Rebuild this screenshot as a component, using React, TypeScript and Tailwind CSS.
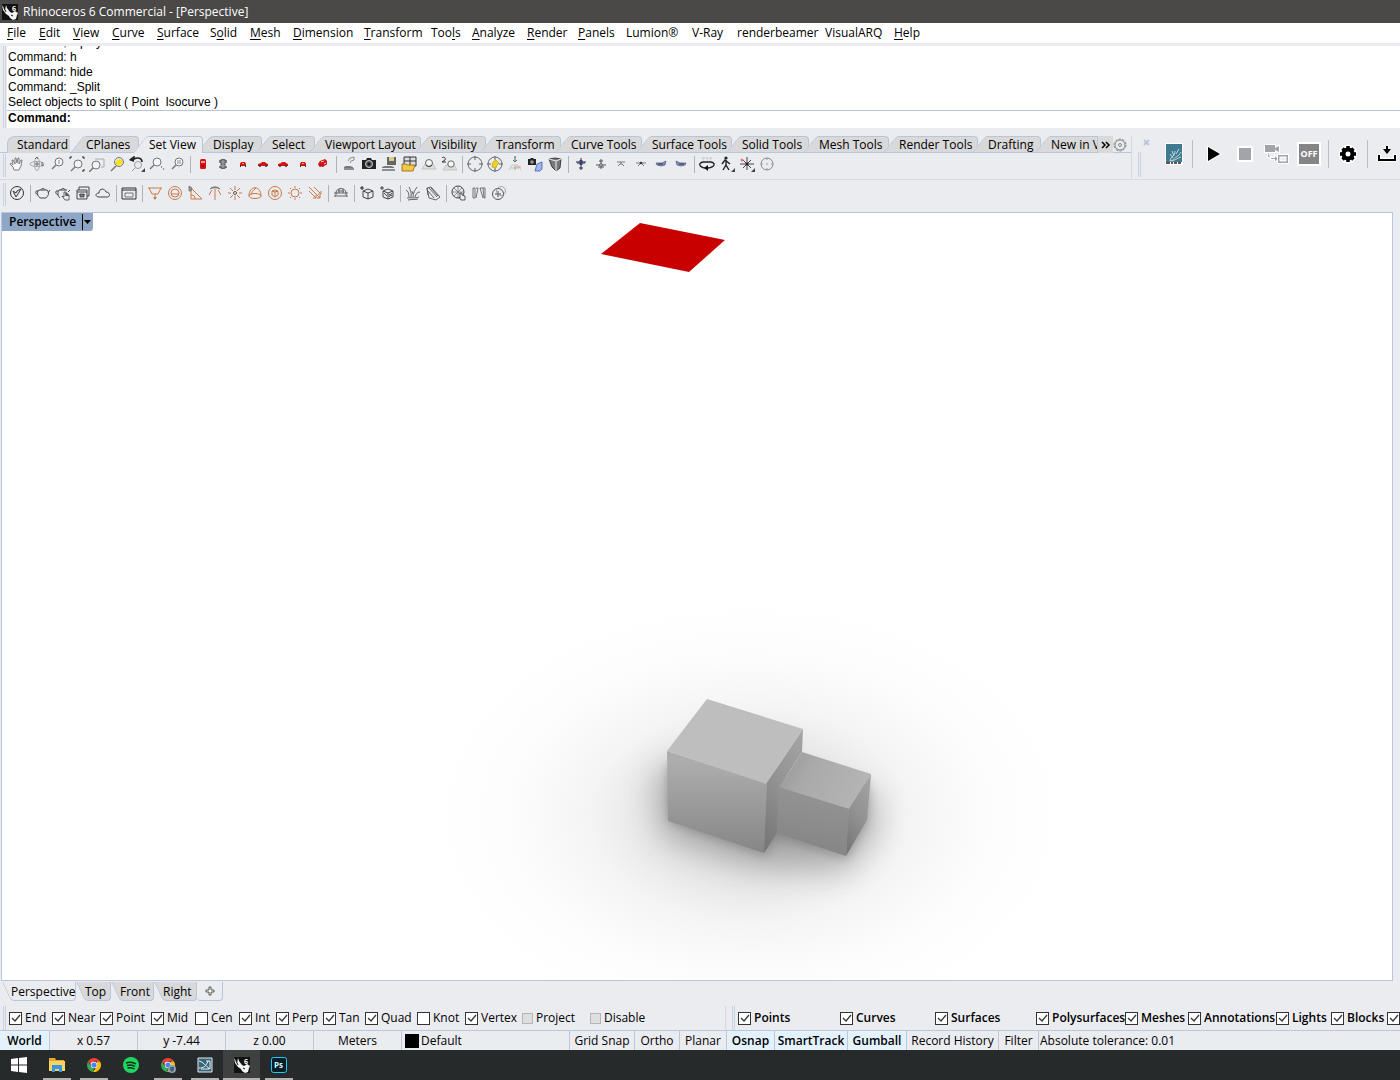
import React from "react";

interface MenuItem {
    label: string;
    // index of the underlined letter, -1 for none
    key: number;
    width: string;
}

interface CheckItem {
    label: string;
    width: string;
    checked?: boolean;
    disabled?: boolean;
}

const menuItems: MenuItem[] = [
    { label: "File", key: 0, width: "w-8" },
    { label: "Edit", key: 0, width: "w-[34px]" },
    { label: "View", key: 0, width: "w-[39px]" },
    { label: "Curve", key: 0, width: "w-[45px]" },
    { label: "Surface", key: 0, width: "w-[53px]" },
    { label: "Solid", key: 1, width: "w-10" },
    { label: "Mesh", key: 0, width: "w-[43px]" },
    { label: "Dimension", key: 0, width: "w-[71px]" },
    { label: "Transform", key: 0, width: "w-[67px]" },
    { label: "Tools", key: 3, width: "w-[41px]" },
    { label: "Analyze", key: 0, width: "w-[55px]" },
    { label: "Render", key: 0, width: "w-[51px]" },
    { label: "Panels", key: 0, width: "w-12" },
    { label: "Lumion®", key: -1, width: "w-[66px]" },
    { label: "V-Ray", key: -1, width: "w-[45px]" },
    { label: "renderbeamer", key: -1, width: "w-[88px]" },
    { label: "VisualARQ", key: -1, width: "w-[69px]" },
    { label: "Help", key: 0, width: "w-10" },
];

const toolTabs = [
    { label: "CPlanes", width: "w-[63px]" },
    { label: "Set View", width: "w-16" },
    { label: "Display", width: "w-[59px]" },
    { label: "Select", width: "w-[53px]" },
    { label: "Viewport Layout", width: "w-[106px]" },
    { label: "Visibility", width: "w-[65px]" },
    { label: "Transform", width: "w-[75px]" },
    { label: "Curve Tools", width: "w-[81px]" },
    { label: "Surface Tools", width: "w-[90px]" },
    { label: "Solid Tools", width: "w-[77px]" },
    { label: "Mesh Tools", width: "w-20" },
    { label: "Render Tools", width: "w-[89px]" },
    { label: "Drafting", width: "w-[63px]" },
];

const osnaps: CheckItem[] = [
    { label: "End", width: "w-[43px]", checked: true },
    { label: "Near", width: "w-12", checked: true },
    { label: "Point", width: "w-[51px]", checked: true },
    { label: "Mid", width: "w-11", checked: true },
    { label: "Cen", width: "w-11" },
    { label: "Int", width: "w-[37px]", checked: true },
    { label: "Perp", width: "w-[47px]", checked: true },
    { label: "Tan", width: "w-[42px]", checked: true },
    { label: "Quad", width: "w-[52px]", checked: true },
    { label: "Knot", width: "w-12" },
    { label: "Vertex", width: "w-[57px]", checked: true },
    { label: "Project", width: "w-[68px]", disabled: true },
    { label: "Disable", width: "w-[135px]", disabled: true },
];

const filters: CheckItem[] = [
    { label: "Points", width: "w-[102px]", checked: true },
    { label: "Curves", width: "w-[95px]", checked: true },
    { label: "Surfaces", width: "w-[101px]", checked: true },
    { label: "Polysurfaces", width: "w-[89px]", checked: true },
    { label: "Meshes", width: "w-[63px]", checked: true },
    { label: "Annotations", width: "w-[88px]", checked: true },
    { label: "Lights", width: "w-[55px]", checked: true },
    { label: "Blocks", width: "w-14", checked: true },
    { label: "", width: "w-5", checked: true },
];

const lens = (cx: number, cy: number) => (
    <>
        <circle cx={cx} cy={cy} r="4" stroke="#777" fill="#f3f4f6" />
        <path d={`M${cx - 3} ${cy + 3}L${cx - 7} ${cy + 7}`} stroke="#777" strokeWidth="1.5" />
    </>
);

const cube = <path d="M4 6l5-2 5 2v6l-5 2-5-2zM4 6l5 2 5-2M9 8v6" stroke="#444" />;

// 16x16 glyphs of the two toolbars
const glyphs: Record<string, React.ReactNode> = {
    pan: <path d="M5 14l-1-3-3-3c0-1 1-1 3 1L3 4h1l2 4V2h1l1 5 1-5h1v6l2-4h1l-1 6-2 4z" stroke="#666" fill="#f8f8f8" strokeWidth=".8" />,
    rotate: (
        <>
            <ellipse cx="8" cy="8" rx="7" ry="2.5" stroke="#999" strokeWidth=".8" />
            <ellipse cx="8" cy="8" rx="2.5" ry="6.5" stroke="#999" strokeWidth=".8" />
            <path d="M8 6v4M6 8h4M13 6v4l2-1M6 3l2-2 1 2" stroke="#666" />
        </>
    ),
    zoom: <>{lens(10, 6)}<path d="M10 4v4M9 5h2M9 7h2" stroke="#999" strokeWidth=".7" /></>,
    zoomExt: <>{lens(9, 8)}<path d="M1 1h2M1 1v2M15 1h-2M15 1v2M15 15h-2M15 15v-2" stroke="#222" /></>,
    zoomWin: <><path d="M6 3h9v8h-3" stroke="#aaa" />{lens(7, 9)}</>,
    zoomSel: <><path d="M7 5l3-2 4 1-1 4-4 2-3-2z" fill="#f4df20" /><circle cx="10" cy="6" r="4.5" stroke="#777" /><path d="M7 10l-5 5" stroke="#777" strokeWidth="1.5" /></>,
    undo: <><path d="M1 4l4-3v2c4-2 8-1 8 3" stroke="#222" strokeWidth="1.600" /><path d="M0 4l5-3v5z" fill="#222" /><circle cx="9" cy="9" r="3.500" stroke="#999" /><path d="M6 12l-3 3" stroke="#999" /><path d="M16 12v4h-4z" fill="#444" /></>,
    zoomDyn: <>{lens(8, 6)}<path d="M12 11h1M14 13h1" stroke="#333" /></>,
    zoom11: <>{lens(10, 6)}<path d="M9 4v4M11 4v4" stroke="#777" strokeWidth=".8" /></>,
    carTop: <><rect x="5" y="3" width="6" height="10" rx="1.500" fill="#d81212" /><rect x="6" y="5" width="4" height="2" fill="#ff9a9a" /><path d="M6.500 10h3" stroke="#6b0000" /></>,
    carBottom: <><rect x="5.500" y="3" width="5" height="10" rx="1" fill="#666" /><path d="M8 4v8M6 6h4M6 10h4" stroke="#aaa" /><path d="M5 4v3M11 4v3M5 10v2M11 10v2" stroke="#222" /></>,
    carFront: <><path d="M5 8l1-2h4l1 2v2H5z" fill="#d81212" /><path d="M5.500 9v2M10.500 9v2" stroke="#333" /><path d="M7 7.500h2" stroke="#f8b050" /></>,
    carSide: <><path d="M3 8l3-1 1-1h3l1 1 2 1v2H3z" fill="#d81212" /><circle cx="5" cy="10" r="1" fill="#333" /><circle cx="11" cy="10" r="1" fill="#333" /></>,
    carPersp: <><path d="M3 8l2-3 5-2 2 2v3l-4 3-4-1z" fill="#d81212" /><path d="M6 6l3-1M9 8l2-1" stroke="#fff" strokeWidth=".8" /><path d="M5 9v2M11 8v1" stroke="#333" /></>,
    camCar: <><path d="M3 11l2-1h4l3 1v1H3z" fill="#777" /><path d="M7 5l2-3 4-1v3l-3 1M10 5l-1 2" stroke="#777" strokeWidth=".8" /><path d="M3 13h10" stroke="#333" /></>,
    camera: <><path d="M1 4h4l1-2h4l1 2h4v9H1z" fill="#222" /><circle cx="8" cy="8" r="3.500" fill="#555" stroke="#ccc" /><circle cx="8" cy="8" r="1.500" fill="#111" /></>,
    saveView: <><path d="M6 1h9v8H6z" fill="#666" /><path d="M8 1h5v4H8z" fill="#d9cf80" /><path d="M1 11l3-1h6l3 1v1H1z" fill="#777" /><path d="M1 14h13" stroke="#333" /></>,
    openView: <><path d="M3 1h12v9H3z" fill="#ddd" stroke="#333" /><path d="M9 1v9M3 5h12" stroke="#333" /><path d="M1 8h4l1 1h8l-2 6H1z" fill="#f5c842" stroke="#8a6510" strokeWidth=".8" /></>,
    persp: <><path d="M1 13l3-5h8l3 5z" stroke="#bbb" fill="#ddd" strokeWidth=".8" /><circle cx="8" cy="7" r="3.500" fill="#f6f6f6" stroke="#666" /><path d="M5 9c2 2 4 2 6 0" stroke="#333" /></>,
    persp2: <><path d="M2 14l3-5h8l3 5z" stroke="#bbb" fill="#ddd" strokeWidth=".8" /><circle cx="10" cy="8" r="3.200" fill="#f6f6f6" stroke="#666" /><path d="M1 2c2-2 4 0 3 2L1 6h4" stroke="#333" /></>,
    target: <><circle cx="8" cy="8" r="7" stroke="#666" /><path d="M8 0v4M8 12v4M0 8h4M12 8h4" stroke="#666" /></>,
    targetY: <><circle cx="8" cy="8" r="7" stroke="#666" /><path d="M6 6l3-2 3 3-2 2-1 3-4-1z" fill="#f2d21c" stroke="#a98e00" strokeWidth=".6" /><path d="M8 0v4M8 12v4M0 8h4M12 8h4" stroke="#666" /></>,
    cplane: <><path d="M2 14l3-5h6l3 5M8 9v5M4 12h8" stroke="#bbb" strokeWidth=".8" /><path d="M8 1v4M6 4l2 2 2-2M7 1h2" stroke="#666" /><path d="M8 11h6" stroke="#e29a9a" /><path d="M8 11v3" stroke="#8bc38b" /></>,
    camObj: <><path d="M1 3h2l1-1h2l1 1h2v6H1z" fill="#222" /><circle cx="5" cy="6" r="1.800" fill="#999" /><path d="M10 8l5-2v7l-2 2H8z" fill="#9fb8ee" stroke="#3d5eb0" strokeWidth=".8" /></>,
    viewCube: <><path d="M2 3l6-1 6 1-1 9-4 3-4-4z" fill="#777" stroke="#222" strokeWidth=".8" /><path d="M2 3l7 2 5-2M9 5v10" stroke="#eee" /></>,
    planeTop: <><path d="M8 2v12M3 6h10M4 7h8M6 12h4" stroke="#222a44" /><path d="M6.500 4h3v5h-3z" fill="#39456e" /></>,
    planeBottom: <><path d="M8 3v10M6 5h4M3 9h10M5 11h6" stroke="#555" /><circle cx="8" cy="9" r="1.500" fill="#bbb" stroke="#555" strokeWidth=".8" /></>,
    planeFront: <path d="M4 6h8M8 6v2M5 10l2-2h2l2 2" stroke="#777" />,
    planeBack: <><path d="M3 7h10M5 10l2-2M11 10L9 8" stroke="#556" strokeWidth=".8" /><circle cx="8" cy="7" r="1.300" fill="#334" /></>,
    planeL: <><path d="M3 7h6l4-2-1 4-4 1-4-1z" fill="#8d93b8" stroke="#4d5578" strokeWidth=".7" /><path d="M5 8h5" stroke="#336" /></>,
    planeR: <><path d="M13 7H7L3 5l1 4 4 1 4-1z" fill="#8d93b8" stroke="#4d5578" strokeWidth=".7" /><path d="M6 8h5" stroke="#336" /></>,
    turn: <><path d="M3 2h3M7 2h2M10 2h3M4 4h1M8 4h1M11 4h1" stroke="#bbb" /><path d="M4 6c-5 1-4 5 2 6M12 6c5 1 4 5-3 6M4 6h8" stroke="#222" strokeWidth="1.300" /><path d="M9 9v6l-4-3z" fill="#111" /></>,
    walk: <><circle cx="7" cy="2" r="1.600" fill="#222" /><path d="M7 4v5l3 5M7 9l-3 5M3 8l3-4 5 4" stroke="#222" strokeWidth="1.400" /><path d="M16 12v4h-4z" fill="#444" /></>,
    star: <><path d="M8 1v13M1 8h14M4 4l8 8M12 4l-8 8" stroke="#333" strokeWidth=".9" /><circle cx="8" cy="8" r="1.500" fill="#222" /><circle cx="3" cy="4" r="1.500" fill="#e77" /><path d="M16 12v4h-4z" fill="#444" /></>,
    targetSm: <><circle cx="8" cy="8" r="6" stroke="#888" /><path d="M8 2v2M8 12v2M2 8h2M12 8h2M7 8h2" stroke="#999" /></>,
    vray: <><circle cx="8" cy="8" r="6.500" stroke="#333" /><path d="M4 6l3 6 5-8-4 2-1 2z" stroke="#333" /></>,
    teapot: <path d="M4 5h8c3 3 1 6-1 8H5C3 11 1 8 4 5zM6 5c0-2 4-2 4 0M13 8l2-3M3 6C0 5 0 9 3 10" stroke="#444" />,
    teapotHand: <><path d="M4 5h8M6 5c0-2 4-2 4 0M3 6C0 5 0 9 3 10M4 5c-2 3-1 6 1 8M13 7l2-2" stroke="#444" /><path d="M9 7v5l-2-1 3 4h4v-5h-1v1-2h-1v2-3h-1v3V7z" stroke="#444" fill="#eee" strokeWidth=".8" /></>,
    teapotFrame: <><path d="M2 5h10v9H2zM4 5V2h10v9h-2M2 7h10" stroke="#444" /><path d="M5 9h4v3H5zM4 9l1 1M10 9l-1 1" stroke="#444" fill="#777" strokeWidth=".8" /></>,
    cloud: <path d="M4 12c-4 0-4-4 0-4 0-5 6-5 7-1 4 0 5 5 1 5z" stroke="#444" />,
    frame: <><path d="M1 3h14v11H1zM1 5h14" stroke="#333" /><path d="M4 8h8v4H4z" stroke="#777" /></>,
    rect: <><path d="M1 3h14M2 3l3 6h6l3-6M8 9v5" stroke="#c77b48" /><path d="M6 12h4l-2 3z" fill="#c77b48" /></>,
    ring: <><circle cx="8" cy="8" r="6.500" stroke="#c77b48" /><circle cx="8" cy="8" r="4" stroke="#c77b48" /><path d="M4 9h8" stroke="#c77b48" /></>,
    spot: <><path d="M4 3v11h11zM4 10c3 0 4 1 4 4" stroke="#c77b48" /><path d="M2 1l3 2-1 3-2 0z" fill="#999" stroke="#666" strokeWidth=".7" /></>,
    ies: <><path d="M8 4v11M5 5L2 10M11 5l3 5" stroke="#c77b48" /><path d="M3 4c2-3 8-3 10 0l-3-1H6z" fill="#888" stroke="#777" strokeWidth=".7" /></>,
    omni: <><path d="M8 1v4M8 11v4M1 8h3M12 8h3M3 3l3 3M13 3l-3 3M3 13l3-3M13 13l-3-3" stroke="#c77b48" /><circle cx="8" cy="8" r="1.500" stroke="#555" /></>,
    dome: <><path d="M2 11c0-11 12-11 12 0M9 3c-3 2-5 5-5 7" stroke="#c77b48" /><ellipse cx="8" cy="11" rx="6" ry="2.500" stroke="#c77b48" /></>,
    meshLight: <><circle cx="8" cy="8" r="6.500" stroke="#c77b48" /><path d="M5 6l3-1 3 1v4l-3 2-3-2zM5 6l3 1 3-1M8 7v5" stroke="#c77b48" /></>,
    sun: <><circle cx="8" cy="8" r="4" stroke="#c77b48" /><path d="M8 1v2M8 13v2M1 8h2M13 8h2M3 3l1 1M12 12l1 1M13 3l-1 1M4 12l-1 1" stroke="#c77b48" /></>,
    rays: <><path d="M2 6l7 7M2 2l11 11M7 2l7 7" stroke="#c77b48" /><path d="M9 10v3H6M13 10v3h-3M14 6v3h-3" stroke="#c77b48" /></>,
    domeTool: <path d="M1 8h14M3 8c0-6 10-6 10 0M4 11h8M3 8v4M13 8v4M5 6h6M6 4v4M10 4v4M1 11h2M13 11h2" stroke="#555" strokeWidth=".9" />,
    cubeT: <>{cube}<path d="M3 1v4M1 3h4" stroke="#222" /></>,
    cubeX: <>{cube}<path d="M3 1v4M1 3h4M5 8l3 3M10 9l3 2M10 12l3-4" stroke="#333" strokeWidth=".9" /></>,
    fur: <path d="M2 13c4-1 8 1 12-1M3 15c4-1 7 0 10-1M4 12C4 8 3 6 1 5M6 12C7 8 5 4 4 2M8 12c0-4 2-7 4-10M10 12c1-3 2-5 5-5M8 9l-1-3" stroke="#555" strokeWidth=".9" />,
    clip: <path d="M2 3l4-1 9 10-4 3-7-2zM4 3l8 9M6 3l7 8M3 6l6 7M2 3l1 7" stroke="#555" strokeWidth=".9" />,
    ball: <><circle cx="7" cy="7" r="6" stroke="#444" /><path d="M3 3l8 8M11 3l-8 8M7 1v12M1 7h12" stroke="#777" strokeWidth=".8" /><path d="M9 8v5l-1-1 2 3h4v-4l-3-1V8z" fill="#eee" stroke="#333" strokeWidth=".8" /></>,
    mirror: <path d="M2 3h2v10H2zM5 3l2 0-2 10M14 3h-2l-3 0 3 10M12 3l1 10h1V3" stroke="#666" strokeWidth=".9" />,
    sphere: <><circle cx="7" cy="9" r="5.500" stroke="#555" /><path d="M7 6v6M4 9h6" stroke="#555" /><circle cx="10" cy="6" r="4.500" stroke="#888" strokeWidth=".7" /></>,
};

const viewTools = [
    "pan", "rotate", "zoom", "zoomExt", "zoomWin", "zoomSel", "undo", "zoomDyn", "zoom11", "|",
    "carTop", "carBottom", "carFront", "carSide", "carSide", "carFront", "carPersp", "|",
    "camCar", "camera", "saveView", "openView", "persp", "persp2", "|",
    "target", "targetY", "cplane", "camObj", "viewCube", "|",
    "planeTop", "planeBottom", "planeFront", "planeBack", "planeL", "planeR", "|",
    "turn", "walk", "star", "targetSm",
];

const vrayTools = [
    "vray", "|", "teapot", "teapotHand", "teapotFrame", "cloud", "|", "frame", "|",
    "rect", "ring", "spot", "ies", "omni", "dome", "meshLight", "sun", "rays", "|",
    "domeTool", "|", "cubeT", "cubeX", "|", "fur", "clip", "|", "ball", "mirror", "sphere",
];

function Grip() {
    return <div className="w-[3px] shrink-0 self-stretch border-x border-[#c9d1e3]" />;
}

function Toolbar({ tools, label }: { tools: string[]; label: string }) {
    return (
        <div role="toolbar" aria-label={label} className="flex h-[23px] items-start">
            {tools.map((tool, idx) =>
                tool === "|" ? (
                    <span key={idx} className="flex w-[6px] justify-center pt-[2px]">
                        <span className="h-[17px] w-px bg-[#b0b2b8]" />
                    </span>
                ) : (
                    <button key={idx} type="button" aria-label={tool} className="flex h-5 w-5 items-center justify-center">
                        <svg viewBox="0 0 16 16" fill="none" className="size-4">{glyphs[tool]}</svg>
                    </button>
                )
            )}
        </div>
    );
}

function RhinoLogo() {
    return (
        <svg viewBox="0 0 16 16" className="size-4">
            <rect width="16" height="16" fill="#111" />
            <path d="M0 1l1 5 3 4 3 2 1 2 3 2 3-1 1-4 1-2-3-2-3 2-2-1-3-4-1-3-1 5-3-5z" fill="#f4f4f4" />
            <path d="M2 4l2 4M9 11l2 1" stroke="#111" fill="none" />
            <text x="10" y="7" fontSize="7" fontWeight="700" fill="#fff" fontFamily="Open Sans, sans-serif">6</text>
        </svg>
    );
}

function ToolTab({ label, width, active }: { label: string; width: string; active?: boolean }) {
    const fill = active
        ? "z-10 before:bg-[#ebecf0] after:bg-[#ebecf0]"
        : "before:bg-[#d9d9d9] after:bg-[#d9d9d9] before:border-b after:border-b";
    return (
        <button
            type="button"
            role="tab"
            aria-selected={!!active}
            className={`relative isolate h-[17px] shrink-0 pl-4 text-left whitespace-nowrap before:absolute before:inset-y-0 before:left-0 before:-z-10 before:w-5 before:origin-bottom-left before:-skew-x-[38deg] before:rounded-tl-[3px] before:border-t before:border-l before:border-[#b9c4de] after:absolute after:inset-y-0 after:-right-[6px] after:left-[18px] after:-z-20 after:rounded-tr-[4px] after:border-t after:border-r after:border-[#b9c4de] ${fill} ${width}`}
        >
            {label}
        </button>
    );
}

function ViewTab({ label, width, active }: { label: string; width: string; active?: boolean }) {
    const fill = active ? "z-10 before:bg-[#ebecf0] after:bg-[#ebecf0]" : "before:bg-[#d9d9d9] after:bg-[#d9d9d9]";
    return (
        <button
            type="button"
            role="tab"
            aria-selected={!!active}
            className={`relative isolate h-[19px] pl-[9px] text-left before:absolute before:inset-y-0 before:left-0 before:-z-10 before:w-4 before:origin-top-left before:skew-x-[25deg] before:rounded-bl-[4px] before:border-b before:border-l before:border-[#b9c4de] after:absolute after:inset-y-0 after:right-0 after:left-3 after:-z-20 after:rounded-br-[4px] after:border-r after:border-b after:border-[#b9c4de] ${fill} ${width}`}
        >
            {label}
        </button>
    );
}

function Check({ item, bold }: { item: CheckItem; bold?: boolean }) {
    return (
        <label className={`flex shrink-0 items-center gap-[3px] whitespace-nowrap ${item.width} ${bold ? "font-semibold" : ""}`}>
            <span className="grid shrink-0 place-items-center *:col-start-1 *:row-start-1">
                <input
                    type="checkbox"
                    aria-label={item.label || "Control points"}
                    defaultChecked={item.checked}
                    disabled={item.disabled}
                    className="peer size-[13px] appearance-none border border-[#333] bg-white disabled:size-[11px] disabled:border-[#b5b5b5] disabled:bg-[#dedede]"
                />
                <svg viewBox="0 0 13 13" className="pointer-events-none hidden size-[13px] peer-checked:block">
                    <path d="M3 6l3 3 5-6" fill="none" stroke="#333" strokeWidth="1.3" />
                </svg>
            </span>
            {item.label}
        </label>
    );
}

function LumionBar() {
    return (
        <div className="flex min-w-[260px] flex-1 border-l border-[#d3d9e7] pl-[6px]">
            <div className="flex flex-col items-start pt-[2px] pb-[2px]">
                <button type="button" aria-label="Close toolbar" className="mb-[5px] ml-1 size-[9px]">
                    <svg viewBox="0 0 9 9"><path d="M2 2l5 5M7 2L2 7" stroke="#b9c4de" strokeWidth="2" /></svg>
                </button>
                <div className="flex flex-1"><Grip /></div>
            </div>
            <div className="ml-[10px] flex h-9 items-center">
                <button type="button" aria-label="Lumion" className="ml-1">
                    <svg viewBox="0 0 18 22" className="h-[22px] w-[18px]">
                        <rect width="18" height="22" rx="1" fill="#fff" />
                        <rect x="1" y="1" width="16" height="18" fill="#3f7a91" />
                        <path d="M5 18c1-6 5-4 5-10M7 18c3-5 7-4 9-9M5 18c5 0 7-3 11-4M9 13L7 8M11 11l3-5M8 15l-3-4" stroke="#cfe2e8" fill="none" strokeWidth=".9" />
                        <path d="M1 20h4M6 20h2M9 20h3M13 20h3" stroke="#222" strokeWidth="1.500" />
                    </svg>
                </button>
                <span className="mx-[9px] h-7 w-px bg-[#bbbdc2]" />
                <button type="button" aria-label="Play" className="ml-[3px]">
                    <svg viewBox="0 0 18 18" className="size-[18px]"><path d="M3 2l12 7-12 7z" fill="#000" stroke="#fff" strokeWidth="2" paintOrder="stroke" /></svg>
                </button>
                <button type="button" aria-label="Stop" className="ml-[14px] size-4 border-2 border-white bg-[#a2a4a9]" />
                <button type="button" aria-label="Camera sync" className="ml-[10px]">
                    <svg viewBox="0 0 26 22" className="h-[22px] w-[26px]">
                        <g stroke="#fff" strokeWidth="2" paintOrder="stroke" fill="#a2a4a9">
                            <path d="M2 2h10v3l4-2v6l-4-2v2H2z" />
                            <path d="M5 9v5h2v2M8 15h4v-2l3 3-3 2v-2H8z" />
                            <path d="M15 12h10v8H15zm1.500 1.500v5h7v-5z" fillRule="evenodd" />
                        </g>
                    </svg>
                </button>
                <button type="button" className="ml-2 h-6 w-6 border-2 border-white bg-[#858585] text-[9px] leading-5 font-bold text-white">
                    OFF
                </button>
                <span className="mx-[7px] h-7 w-px bg-[#bbbdc2]" />
                <button type="button" aria-label="Settings" className="ml-[2px]">
                    <svg viewBox="0 0 20 20" className="size-5">
                        <circle cx="10" cy="10" r="9.500" fill="#fff" />
                        <circle cx="10" cy="10" r="4.500" fill="none" stroke="#000" strokeWidth="4" />
                        <path d="M10 2v3M10 15v3M2 10h3M15 10h3M4.500 4.500l2 2M13.500 13.500l2 2M15.500 4.500l-2 2M6.500 13.500l-2 2" stroke="#000" strokeWidth="3.500" />
                    </svg>
                </button>
                <span className="mx-[9px] h-7 w-px bg-[#bbbdc2]" />
                <button type="button" aria-label="Export">
                    <svg viewBox="0 0 20 20" className="size-5" fill="none">
                        <path d="M2 10v6h16v-6M10 2v6" stroke="#fff" strokeWidth="4" />
                        <path d="M2 11v5h16v-5" stroke="#000" strokeWidth="2" />
                        <path d="M10 2v5" stroke="#000" strokeWidth="2" />
                        <path d="M6 5h8l-4 5z" fill="#000" />
                    </svg>
                </button>
            </div>
        </div>
    );
}

// rendered view: area light, two boxes and their soft shadow
function Scene() {
    return (
        <svg viewBox="2 213 1390 767" preserveAspectRatio="xMidYMid slice" className="block size-full">
            <defs>
                <radialGradient id="halo">
                    <stop offset="0" stopColor="#777" stopOpacity=".4" />
                    <stop offset=".3" stopColor="#888" stopOpacity=".22" />
                    <stop offset=".5" stopColor="#888" stopOpacity=".09" />
                    <stop offset=".75" stopColor="#999" stopOpacity=".025" />
                    <stop offset="1" stopColor="#aaa" stopOpacity="0" />
                </radialGradient>
                <linearGradient id="front" x1="0" y1="0" x2="0" y2="1">
                    <stop offset=".1" stopColor="#adadad" />
                    <stop offset="1" stopColor="#868686" />
                </linearGradient>
                <linearGradient id="side" x1=".7" y1="0" x2=".3" y2="1">
                    <stop offset="0" stopColor="#a2a2a2" />
                    <stop offset=".5" stopColor="#929292" />
                    <stop offset="1" stopColor="#787878" />
                </linearGradient>
                <linearGradient id="smallTop" x1="0" y1="0" x2="1" y2=".3">
                    <stop offset="0" stopColor="#969696" />
                    <stop offset=".4" stopColor="#aaa" />
                    <stop offset="1" stopColor="#b4b4b4" />
                </linearGradient>
                <linearGradient id="smallFront" x1=".3" y1="0" x2=".1" y2="1">
                    <stop offset="0" stopColor="#949494" />
                    <stop offset="1" stopColor="#838383" />
                </linearGradient>
                <filter id="soft" x="-50%" y="-50%" width="200%" height="200%">
                    <feGaussianBlur stdDeviation="16" />
                </filter>
                <filter id="contact" x="-50%" y="-50%" width="200%" height="200%">
                    <feGaussianBlur stdDeviation="5" />
                </filter>
            </defs>
            <rect x="2" y="213" width="1390" height="767" fill="#fff" />
            <ellipse cx="750" cy="815" rx="320" ry="215" fill="url(#halo)" />
            <path d="M655 775l20-10 180 30 20 0 0 35-30 40-85-4-98-30z" fill="#666" opacity=".45" filter="url(#soft)" />
            <path d="M667 765l200 15 4 15-4 28-20 36-70-20-12 17-97-34z" fill="#555" opacity=".3" filter="url(#contact)" />
            <polygon points="640,223 725,240 689,272 601,254" fill="#c80000" />
            <polygon points="802,752 871,774 849,809 779,788" fill="url(#smallTop)" />
            <polygon points="779,787 849,809 846,856 776,833" fill="url(#smallFront)" />
            <polygon points="849,809 871,774 867,820 846,856" fill="url(#side)" />
            <polygon points="766,784 803,729 802,752 779,787 777,833 764,853" fill="url(#side)" />
            <polygon points="667,751 767,784 764,853 668,821" fill="url(#front)" />
            <polygon points="707,699 803,729 766,784 667,751" fill="#bebebe" />
        </svg>
    );
}

function Chrome() {
    return (
        <>
            <path d="M8 1a7 7 0 0 1 6 3.500H8L5 8 2 4.500A7 7 0 0 1 8 1z" fill="#ea4335" />
            <path d="M2 4.500L5.200 10 8 11.500 7 15A7 7 0 0 1 2 4.500z" fill="#34a853" />
            <path d="M14 4.500A7 7 0 0 1 7 15l4-6V4.500z" fill="#fbbc05" />
            <circle cx="8" cy="8" r="3.300" fill="#fff" />
            <circle cx="8" cy="8" r="2.600" fill="#4285f4" />
        </>
    );
}

const taskApps: { name: string; running?: boolean; active?: boolean; icon: React.ReactNode }[] = [
    {
        name: "File Explorer",
        running: true,
        icon: (
            <>
                <path d="M0 1h6l1 2h8v4H0z" fill="#e8a92c" />
                <path d="M0 4h16v10H0z" fill="#fbd264" />
                <path d="M3 8h10v7h-3v-3H6v3H3z" fill="#3a97dd" />
            </>
        ),
    },
    { name: "Chrome", running: true, icon: <Chrome /> },
    {
        name: "Spotify",
        icon: (
            <>
                <circle cx="8" cy="8" r="8" fill="#1ed760" />
                <path d="M3 6c3-1 7-1 10 1M4 8.500c3-1 6-.5 8 1M4.500 11c2-.5 5-.5 7 1" stroke="#16261c" strokeWidth="1.500" fill="none" />
            </>
        ),
    },
    {
        name: "Chrome profile",
        running: true,
        icon: (
            <>
                <Chrome />
                <circle cx="12" cy="12" r="4" fill="#8aa0ae" />
                <path d="M10 10h4v3l-2 2-2-2z" fill="#476078" />
            </>
        ),
    },
    {
        name: "Lumion LiveSync",
        running: true,
        icon: (
            <>
                <path d="M1 1h14v14H1z" fill="#37667b" stroke="#e5edf0" />
                <path d="M2 4c5 1 6 5 11 8M2 11c4 0 7-1 9-7M9 4h4v8M4 12h8" stroke="#fff" strokeWidth=".9" fill="none" />
            </>
        ),
    },
    { name: "Rhinoceros 6", running: true, active: true, icon: null },
    {
        name: "Photoshop",
        running: true,
        icon: (
            <>
                <rect x=".5" y=".5" width="15" height="15" rx="2" fill="#061e26" stroke="#26c9ff" />
                <text x="3" y="11" fontSize="8" fontWeight="700" fill="#d8f5ff" fontFamily="Open Sans, sans-serif">Ps</text>
            </>
        ),
    },
];

const cell = "flex h-[19px] shrink-0 items-center justify-center border-r border-[#bcc6dc] whitespace-nowrap";
const activeCell = `${cell} bg-[#e3f2fc] font-semibold`;

function App() {
    return (
        <div className="flex min-h-screen flex-col overflow-hidden bg-[#ebecf0] font-['Open_Sans',sans-serif] text-[12px] leading-4 text-black">
            <header className="flex h-[23px] items-center gap-[5px] bg-[#4a4948] pl-[2px] text-white">
                <RhinoLogo />
                <h1>Rhinoceros 6 Commercial - [Perspective]</h1>
            </header>

            <nav className="flex h-5 items-center bg-white pl-[7px]">
                {menuItems.map((item) => (
                    <button key={item.label} type="button" className={`shrink-0 text-left whitespace-nowrap ${item.width}`}>
                        {item.key < 0 ? item.label : (
                            <>
                                {item.label.slice(0, item.key)}
                                <span className="underline underline-offset-2">{item.label[item.key]}</span>
                                {item.label.slice(item.key + 1)}
                            </>
                        )}
                    </button>
                ))}
            </nav>

            <section className="flex gap-px py-[3px] pl-[3px] font-['Liberation_Sans',Arial,sans-serif] leading-[15px]">
                <Grip />
                <div className="flex-1 bg-white">
                    <div className="flex h-16 flex-col justify-end overflow-hidden pl-px whitespace-pre">
                        <p>3 surfaces, 1 polysurface added to selection.</p>
                        <p>Command: h</p>
                        <p>Command: hide</p>
                        <p>Command: _Split</p>
                        <p>Select objects to split ( Point  Isocurve )</p>
                    </div>
                    <label className="flex h-[18px] items-start border-t border-[#b8c4da] pl-px font-bold">
                        Command:
                        <input type="text" className="ml-1 flex-1 font-normal outline-none" />
                    </label>
                </div>
            </section>

            <div className="flex border-b border-[#d3d9e7] pt-[5px]">
                <div className="w-[1131px] shrink-0">
                    <div role="tablist" className="flex border-b border-[#b9c4de] pl-[7px]">
                        <div className="-mb-px flex">
                            <button type="button" role="tab" aria-selected={false} className="relative h-[17px] w-[63px] rounded-tl-[8px] border-t border-l border-[#b9c4de] bg-[#d9d9d9] pl-[9px] text-left">
                                Standard
                            </button>
                            {toolTabs.map((tab) => (
                                <ToolTab key={tab.label} label={tab.label} width={tab.width} active={tab.label === "Set View"} />
                            ))}
                            <div className="w-[62px] overflow-hidden">
                                <ToolTab label="New in V6" width="w-20" />
                            </div>
                            <button type="button" aria-label="More tabs" className="w-4 border-l border-[#b9c4de] bg-[#d9d9d9] text-center">
                                <svg viewBox="0 0 10 8" className="mx-auto h-2 w-[10px]"><path d="M1 1l3 3-3 3M5 1l3 3-3 3" fill="none" stroke="#000" strokeWidth="1.500" /></svg>
                            </button>
                            <button type="button" aria-label="Toolbar options">
                                <svg viewBox="0 0 14 14" className="size-[14px]" fill="none" stroke="#888">
                                    <circle cx="7" cy="7" r="6" strokeDasharray="2.500 1.200" />
                                    <circle cx="7" cy="7" r="5" />
                                    <circle cx="7" cy="7" r="1.500" />
                                </svg>
                            </button>
                        </div>
                    </div>
                    <div className="flex gap-px pt-px pb-[2px] pl-[3px]">
                        <Grip />
                        <Toolbar tools={viewTools} label="Set View" />
                    </div>
                </div>
                <LumionBar />
            </div>

            <div className="mb-[6px] flex gap-px pt-[3px] pl-[3px]">
                <Grip />
                <Toolbar tools={vrayTools} label="V-Ray" />
            </div>

            <main className="relative mr-[7px] ml-px min-h-0 flex-1 border border-[#b9c4de] bg-white">
                <Scene />
                <button type="button" className="absolute top-0 left-0 flex h-[18px] w-[91px] items-center rounded-br-[3px] bg-[#8ea7c6] pl-[7px] font-semibold">
                    <span className="w-[73px] text-left">Perspective</span>
                    <span className="flex h-4 items-center border-l border-black pl-[1px]">
                        <svg viewBox="0 0 7 4" className="h-1 w-[7px]"><path d="M0 0h7L3.500 4z" /></svg>
                    </span>
                </button>
            </main>

            <div role="tablist" className="flex pt-px pl-[2px]">
                <ViewTab label="Perspective" width="w-[74px]" active />
                <ViewTab label="Top" width="w-[35px]" />
                <ViewTab label="Front" width="w-[43px]" />
                <ViewTab label="Right" width="w-[43px]" />
                <button type="button" aria-label="New viewport" className="flex h-[19px] w-[26px] items-center justify-center rounded-b-[4px] border-r border-b border-[#b9c4de]">
                    <svg viewBox="0 0 10 10" className="size-[10px]"><path d="M4 1h2v3h3v2H6v3H4V6H1V4h3z" fill="#fff" stroke="#555" /></svg>
                </button>
            </div>

            <div className="flex h-[29px] items-center overflow-hidden pt-[5px] pl-[3px]">
                <Grip />
                <fieldset className="flex w-[720px] shrink-0 self-stretch border-r border-[#d3d9e7] pl-[3px]">
                    {osnaps.map((item) => <Check key={item.label} item={item} />)}
                </fieldset>
                <div className="ml-[6px] flex self-stretch"><Grip /></div>
                <fieldset className="ml-[3px] flex self-stretch">
                    {filters.map((item) => <Check key={item.label} item={item} bold />)}
                </fieldset>
            </div>

            <div className="flex h-5 overflow-hidden border-t border-[#bcc6dc]">
                <button type="button" className={`${activeCell} w-[50px]`}>World</button>
                <span className={`${cell} w-[88px]`}>x 0.57</span>
                <span className={`${cell} w-[88px]`}>y -7.44</span>
                <span className={`${cell} w-[88px]`}>z 0.00</span>
                <span className={`${cell} w-[88px]`}>Meters</span>
                <button type="button" className="flex h-[19px] w-[168px] items-center gap-[2px] border-r border-[#bcc6dc] pl-[3px]">
                    <span className="size-[14px] bg-black" />
                    Default
                </button>
                <button type="button" className={`${cell} w-[65px]`}>Grid Snap</button>
                <button type="button" className={`${cell} w-[45px]`}>Ortho</button>
                <button type="button" className={`${cell} w-[47px]`}>Planar</button>
                <button type="button" className={`${activeCell} w-12`}>Osnap</button>
                <button type="button" className={`${activeCell} w-[73px]`}>SmartTrack</button>
                <button type="button" className={`${activeCell} w-[59px]`}>Gumball</button>
                <button type="button" className={`${cell} w-[92px]`}>Record History</button>
                <button type="button" className={`${cell} w-10`}>Filter</button>
                <span className="flex items-center pl-px">Absolute tolerance: 0.01</span>
            </div>

            <footer className="flex h-[30px] bg-[#262a2b]">
                <button type="button" aria-label="Start" className="flex w-[38px] items-center justify-center">
                    <svg viewBox="0 0 16 16" className="size-4"><path d="M0 2l7-1v6.500H0zM8 1l8-1v7.500H8zM0 8.500h7V15l-7-1zM8 8.500h8V16l-8-1z" fill="#fff" /></svg>
                </button>
                {taskApps.map((app) => (
                    <button
                        key={app.name}
                        type="button"
                        aria-label={app.name}
                        className={`flex w-[37px] flex-col items-center justify-between pt-[7px] ${app.active ? "bg-[#3f4040]" : ""}`}
                    >
                        {app.icon ? <svg viewBox="0 0 16 16" className="size-4">{app.icon}</svg> : <RhinoLogo />}
                        {app.running && <span className={`h-[2px] bg-[#b5b3b1] ${app.active ? "w-full" : "w-7"}`} />}
                    </button>
                ))}
            </footer>
        </div>
    );
}

export default App;
